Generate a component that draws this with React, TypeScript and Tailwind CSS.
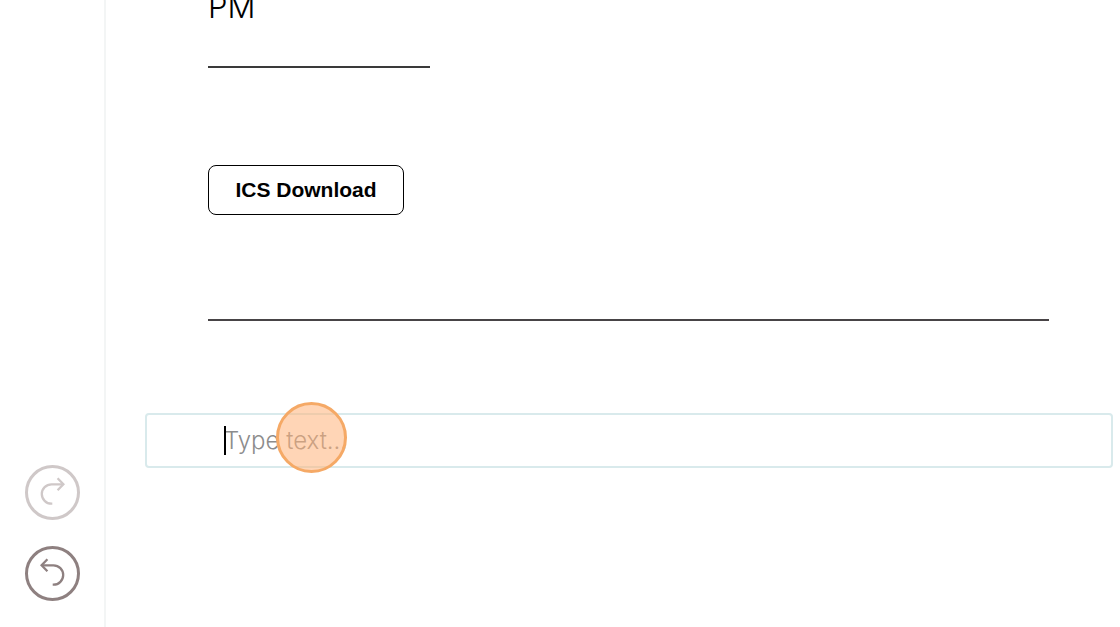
import React from "react";

type HistoryButtonProps = { label: string; tone: string; flipped?: boolean };

function HistoryButton({ label, tone, flipped }: HistoryButtonProps) {
  return (
    <button
      type="button"
      aria-label={label}
      className={`flex size-[55px] items-center justify-center rounded-full border-3 ${tone}`}
    >
      <svg
        viewBox="0 0 55 55"
        className={`size-[55px] shrink-0 ${flipped ? "-scale-x-100" : ""}`}
        fill="none"
        stroke="currentColor"
        strokeWidth="2.3"
      >
        <path d="M27.3 38.7h-.8a9.7 9.7 0 0 1 0-19.4h11.6" />
        <path d="M32.6 13.3l5.8 6-5.8 6" />
      </svg>
    </button>
  );
}

export default function App() {
  return (
    <div className="flex min-h-screen overflow-hidden bg-white font-['Inter',sans-serif] text-black">
      <aside className="flex w-[106px] shrink-0 flex-col items-center justify-end gap-[26px] border-r-2 border-[#f3f5f5] pb-[26px]">
        <HistoryButton label="Redo" tone="border-[#cfc8c8] text-[#cfc8c8]" />
        <HistoryButton label="Undo" tone="border-[#8e8080] text-[#8e8080]" flipped />
      </aside>
      <main className="flex-1 pr-[7px] pl-[39px]">
        <div className="pr-16 pl-[63px]">
          <p className="text-[31px] leading-[14px] font-light">PM</p>
          <hr className="mt-[52px] w-[222px] border-t-2 border-[#3a3a3a]" />
          <button
            type="button"
            className="mt-[97px] block h-[50px] w-[196px] rounded-lg border border-black font-['Liberation_Sans',sans-serif] text-[21px] font-bold"
          >
            ICS Download
          </button>
          <hr className="mt-[104px] border-t-2 border-[#484446]" />
        </div>
        <div className="relative mt-[92px]">
          <input
            type="text"
            aria-label="Type text"
            placeholder="Type text..."
            className="block h-[55px] w-full rounded border-2 border-[#d9eaec] bg-white pl-[77px] text-2xl font-light outline-none placeholder:text-[#8c8c8c]"
          />
          <span className="absolute top-[13px] left-[79px] h-[29px] w-[2px] bg-black" />
          <span className="absolute -top-[11px] left-[131px] size-[71px] rounded-full border-3 border-[#f5a966] bg-[#ffb27a]/55" />
        </div>
      </main>
    </div>
  );
}
